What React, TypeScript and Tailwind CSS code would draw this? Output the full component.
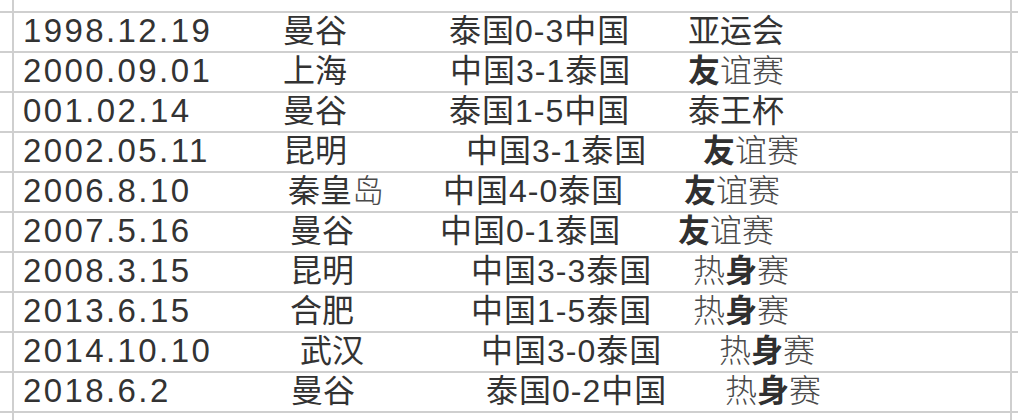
type Part = { t: string; w?: 'b' | 'l' };

interface Row {
  date: string;
  city: Part[];
  cityPad: string;
  match: string;
  matchPad: string;
  event: Part[];
  eventPad: string;
}

const rows: Row[] = [
  { date: '1998.12.19', city: [{ t: '曼谷' }], cityPad: 'pl-[10px]', match: '泰国0-3中国', matchPad: 'pl-[16px]', event: [{ t: '亚运会' }], eventPad: 'pl-[15px]' },
  { date: '2000.09.01', city: [{ t: '上海' }], cityPad: 'pl-[10px]', match: '中国3-1泰国', matchPad: 'pl-[17px]', event: [{ t: '友', w: 'b' }, { t: '谊赛', w: 'l' }], eventPad: 'pl-[15px]' },
  { date: '001.02.14', city: [{ t: '曼谷' }], cityPad: 'pl-[10px]', match: '泰国1-5中国', matchPad: 'pl-[16px]', event: [{ t: '泰王杯' }], eventPad: 'pl-[15px]' },
  { date: '2002.05.11', city: [{ t: '昆明' }], cityPad: 'pl-[10px]', match: '中国3-1泰国', matchPad: 'pl-[33px]', event: [{ t: '友', w: 'b' }, { t: '谊赛', w: 'l' }], eventPad: 'pl-[30px]' },
  { date: '2006.8.10', city: [{ t: '秦皇' }, { t: '岛', w: 'l' }], cityPad: 'pl-[15px]', match: '中国4-0泰国', matchPad: 'pl-[10px]', event: [{ t: '友', w: 'b' }, { t: '谊赛', w: 'l' }], eventPad: 'pl-[11px]' },
  { date: '2007.5.16', city: [{ t: '曼谷' }], cityPad: 'pl-[17px]', match: '中国0-1泰国', matchPad: 'pl-[7px]', event: [{ t: '友', w: 'b' }, { t: '谊赛', w: 'l' }], eventPad: 'pl-[5px]' },
  { date: '2008.3.15', city: [{ t: '昆明' }], cityPad: 'pl-[17px]', match: '中国3-3泰国', matchPad: 'pl-[38px]', event: [{ t: '热', w: 'l' }, { t: '身', w: 'b' }, { t: '赛', w: 'l' }], eventPad: 'pl-[20px]' },
  { date: '2013.6.15', city: [{ t: '合肥' }], cityPad: 'pl-[17px]', match: '中国1-5泰国', matchPad: 'pl-[38px]', event: [{ t: '热', w: 'l' }, { t: '身', w: 'b' }, { t: '赛', w: 'l' }], eventPad: 'pl-[20px]' },
  { date: '2014.10.10', city: [{ t: '武汉' }], cityPad: 'pl-[27px]', match: '中国3-0泰国', matchPad: 'pl-[48px]', event: [{ t: '热', w: 'l' }, { t: '身', w: 'b' }, { t: '赛', w: 'l' }], eventPad: 'pl-[46px]' },
  { date: '2018.6.2', city: [{ t: '曼谷' }], cityPad: 'pl-[18px]', match: '泰国0-2中国', matchPad: 'pl-[53px]', event: [{ t: '热', w: 'l' }, { t: '身', w: 'b' }, { t: '赛', w: 'l' }], eventPad: 'pl-[52px]' },
];

function Parts({ parts }: { parts: Part[] }) {
  return (
    <>
      {parts.map((p, i) => (
        <span
          key={i}
          className={
            p.w === 'b'
              ? 'font-semibold text-[#303030]'
              : p.w === 'l'
                ? 'font-light text-[#4a4a4a]'
                : ''
          }
        >
          {p.t}
        </span>
      ))}
    </>
  );
}

function Line({ children, h = 'h-[40px]', border = true }: { children?: React.ReactNode; h?: string; border?: boolean }) {
  return (
    <div className={`flex ${h} ${border ? 'border-b-2 border-[#cfcfcf]' : ''}`}>
      <div className="w-[14px] shrink-0 border-r-2 border-[#cfcfcf]" />
      <div className="flex w-[996px] shrink-0 items-center pb-[3px]">{children}</div>
      <div className="flex-1 border-l-2 border-[#cfcfcf]" />
    </div>
  );
}

export default function App() {
  return (
    <div className="h-[420px] w-[1018px] overflow-hidden bg-white font-['Liberation_Sans','Noto_Sans_CJK_SC',sans-serif] text-[32px] leading-none text-[#333]">
      <Line h="h-[13px]" />
      {rows.map((r) => (
        <Line key={r.date}>
          <div className="w-[259px] shrink-0 pl-[9px] text-[33px] tracking-[2.4px]">{r.date}</div>
          <div className={`w-[160px] shrink-0 ${r.cityPad}`}>
            <Parts parts={r.city} />
          </div>
          <div className={`w-[240px] shrink-0 ${r.matchPad} tracking-[1px]`}>{r.match}</div>
          <div className={`flex-1 ${r.eventPad}`}>
            <Parts parts={r.event} />
          </div>
        </Line>
      ))}
      <Line h="h-[10px]" border={false} />
    </div>
  );
}
